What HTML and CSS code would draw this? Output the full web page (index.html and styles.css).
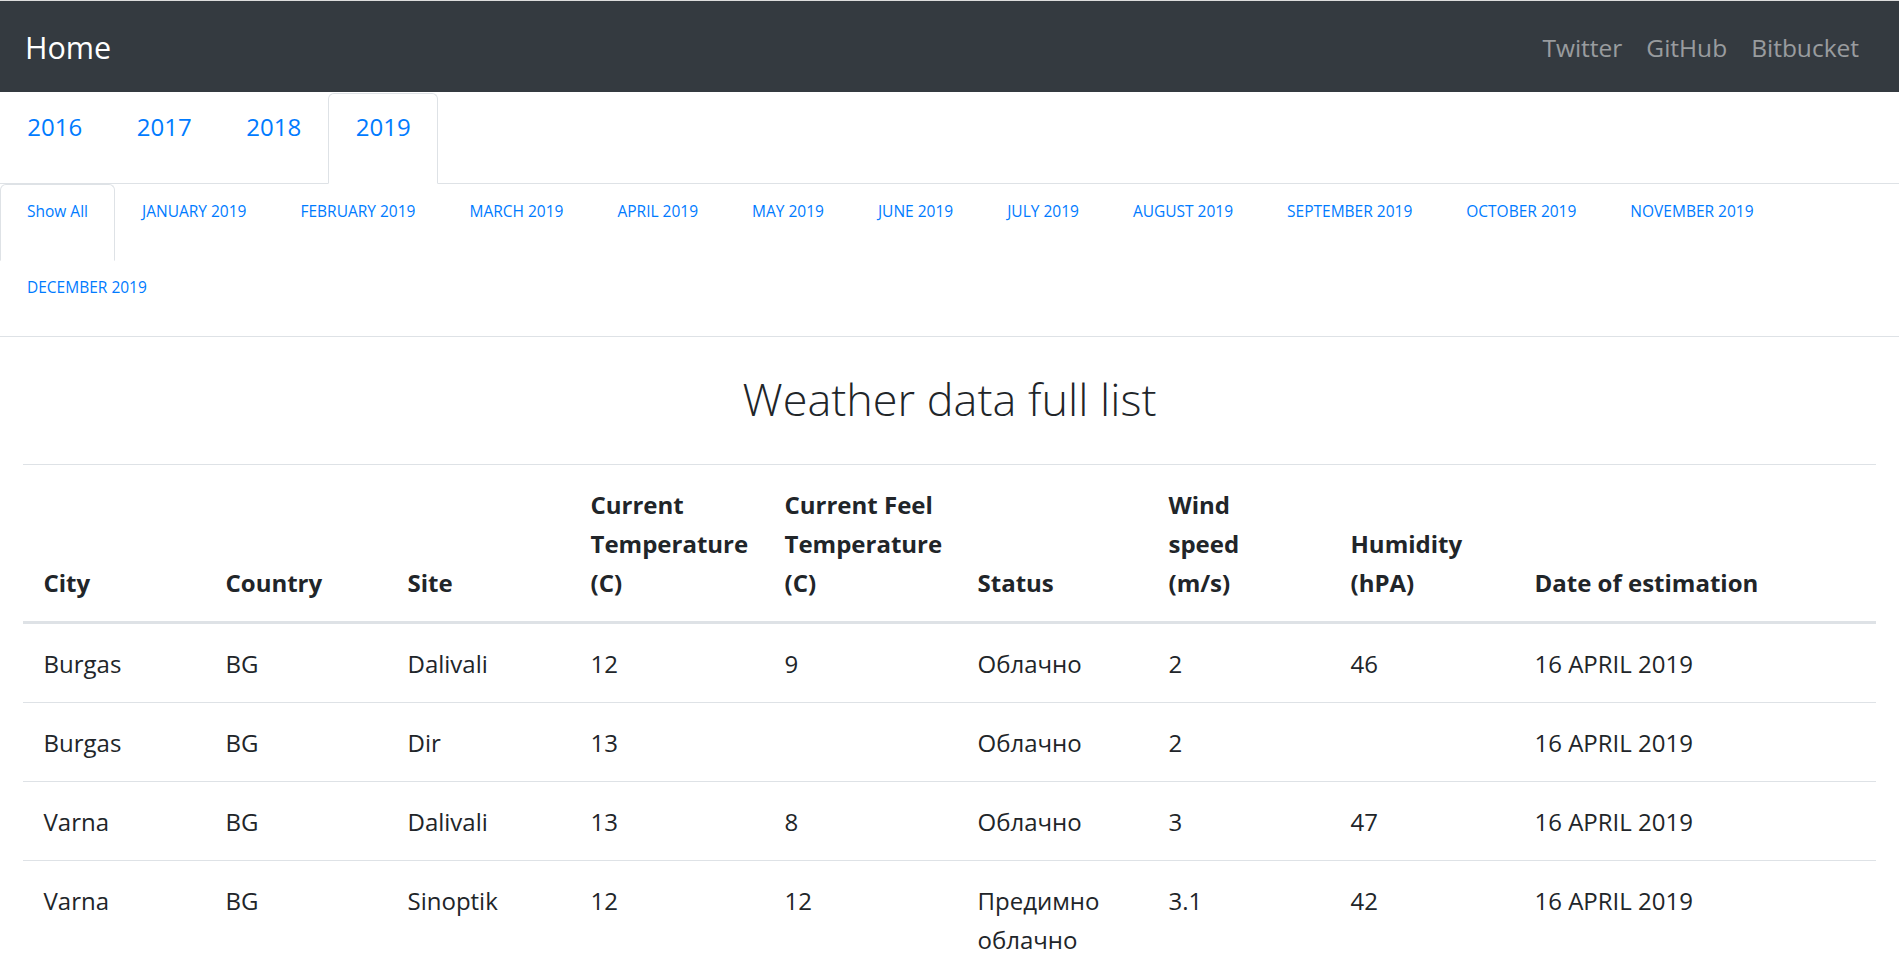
FILE: index.html
```html
<!DOCTYPE html>
<html lang="en">
<head>
<meta charset="utf-8">
<title>Weather data full list</title>
<link rel="stylesheet" href="styles.css">
</head>
<body>
<nav class="navbar">
  <a class="brand" href="#">Home</a>
  <ul class="navlinks">
    <li><a href="#">Twitter</a></li>
    <li><a href="#">GitHub</a></li>
    <li><a href="#">Bitbucket</a></li>
  </ul>
</nav>

<ul class="tabs years">
  <li><a class="tab" href="#">2016</a></li>
  <li><a class="tab" href="#">2017</a></li>
  <li><a class="tab" href="#">2018</a></li>
  <li><a class="tab active" href="#">2019</a></li>
</ul>

<ul class="tabs months">
  <li><a class="tab active" href="#">Show All</a></li>
  <li><a class="tab" href="#">JANUARY 2019</a></li>
  <li><a class="tab" href="#">FEBRUARY 2019</a></li>
  <li><a class="tab" href="#">MARCH 2019</a></li>
  <li><a class="tab" href="#">APRIL 2019</a></li>
  <li><a class="tab" href="#">MAY 2019</a></li>
  <li><a class="tab" href="#">JUNE 2019</a></li>
  <li><a class="tab" href="#">JULY 2019</a></li>
  <li><a class="tab" href="#">AUGUST 2019</a></li>
  <li><a class="tab" href="#">SEPTEMBER 2019</a></li>
  <li><a class="tab" href="#">OCTOBER 2019</a></li>
  <li><a class="tab" href="#">NOVEMBER 2019</a></li>
  <li><a class="tab" href="#">DECEMBER 2019</a></li>
</ul>

<main class="container">
  <h2 class="title">Weather data full list</h2>
  <table class="weather">
    <colgroup>
      <col class="c-std">
      <col class="c-std">
      <col class="c-site">
      <col class="c-wide">
      <col class="c-wide2">
      <col class="c-status">
      <col class="c-std">
      <col class="c-hum">
      <col>
    </colgroup>
    <thead>
      <tr>
        <th>City</th>
        <th>Country</th>
        <th>Site</th>
        <th>Current<br>Temperature<br>(C)</th>
        <th>Current Feel<br>Temperature<br>(C)</th>
        <th>Status</th>
        <th>Wind<br>speed<br>(m/s)</th>
        <th>Humidity<br>(hPA)</th>
        <th>Date of estimation</th>
      </tr>
    </thead>
    <tbody>
      <tr>
        <td>Burgas</td><td>BG</td><td>Dalivali</td><td>12</td><td>9</td><td>Облачно</td><td>2</td><td>46</td><td>16 APRIL 2019</td>
      </tr>
      <tr>
        <td>Burgas</td><td>BG</td><td>Dir</td><td>13</td><td></td><td>Облачно</td><td>2</td><td></td><td>16 APRIL 2019</td>
      </tr>
      <tr>
        <td>Varna</td><td>BG</td><td>Dalivali</td><td>13</td><td>8</td><td>Облачно</td><td>3</td><td>47</td><td>16 APRIL 2019</td>
      </tr>
      <tr>
        <td>Varna</td><td>BG</td><td>Sinoptik</td><td>12</td><td>12</td><td>Предимно облачно</td><td>3.1</td><td>42</td><td>16 APRIL 2019</td>
      </tr>
    </tbody>
  </table>
</main>
</body>
</html>
```

FILE: styles.css
```css
* {
  box-sizing: border-box;
}

html, body {
  margin: 0;
  padding: 0;
}

body {
  font-family: "Open Sans", "Noto Sans", "DejaVu Sans", sans-serif;
  font-size: 24px;
  line-height: 1.5;
  color: #212529;
  background: #fff;
  border-top: 1px solid #dcdcdc;
}

a {
  text-decoration: none;
}

/* Navbar */
.navbar {
  display: flex;
  align-items: center;
  justify-content: space-between;
  height: 91px;
  padding: 0 28px 0 25px;
  background: #343a40;
}

.brand {
  color: #fff;
  font-size: 30.5px;
  line-height: 45px;
  margin-top: 2px;
}

.navlinks {
  display: flex;
  list-style: none;
  margin: 2px 0 0;
  padding: 0;
}

.navlinks a {
  display: block;
  padding: 0 12px;
  color: rgba(255, 255, 255, 0.5);
  font-size: 24.5px;
  line-height: 36px;
}

/* Tabs */
.tabs {
  display: flex;
  flex-wrap: wrap;
  list-style: none;
  margin: 0;
  padding: 0;
  border-bottom: 1px solid #dee2e6;
}

.tab {
  display: block;
  margin-bottom: -1px;
  border: 1px solid transparent;
  border-radius: 6px 6px 0 0;
  color: #007bff;
  background: transparent;
}

.tab.active {
  border-color: #dee2e6 #dee2e6 #fff;
  background: #fff;
}

.years {
  padding-top: 1px;
}

.years .tab {
  padding: 14px 26.3px 37px;
  font-size: 24px;
  line-height: 38px;
}

.months .tab {
  padding: 14px 26px 37px;
  font-size: 15.5px;
  line-height: 24px;
}

/* Content */
.container {
  padding: 0 23px;
}

.title {
  margin: 33px 0 36px;
  text-align: center;
  font-size: 45px;
  font-weight: 300;
  line-height: 58px;
}

.weather {
  width: 100%;
  border-collapse: collapse;
  table-layout: fixed;
  font-size: 24px;
  line-height: 39px;
}

.c-std { width: 182px; }
.c-site { width: 183px; }
.c-wide { width: 194px; }
.c-wide2 { width: 193px; }
.c-status { width: 191px; }
.c-hum { width: 184px; }

.weather th,
.weather td {
  padding: 19.5px 20.5px;
  text-align: left;
  border-top: 1px solid #dee2e6;
}

.weather th {
  vertical-align: bottom;
  font-weight: 700;
  border-bottom: 3px solid #dee2e6;
}

.weather td {
  vertical-align: top;
}
```
